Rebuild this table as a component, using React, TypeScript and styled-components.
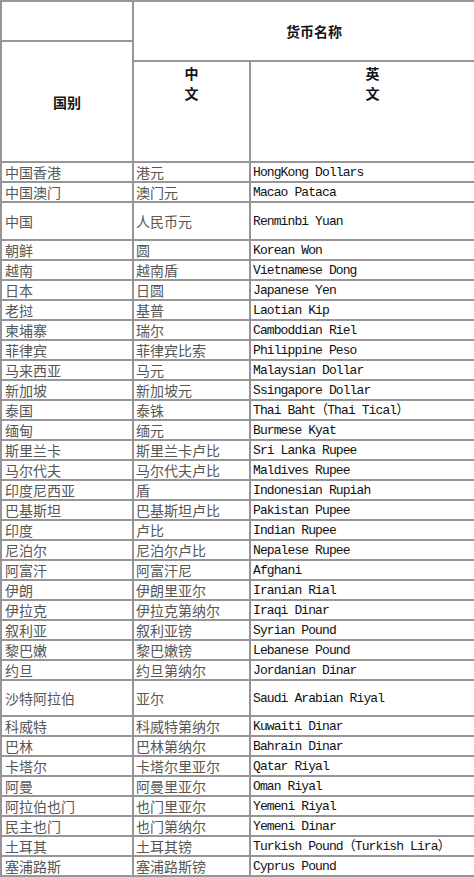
import React from "react";
import styled, { createGlobalStyle } from "styled-components";

type Row = { country: string; zh: string; en: string; height?: number };

const rows: Row[] = [
  { country: "中国香港", zh: "港元", en: "HongKong Dollars" },
  { country: "中国澳门", zh: "澳门元", en: "Macao Pataca" },
  { country: "中国", zh: "人民币元", en: "Renminbi Yuan", height: 36 },
  { country: "朝鲜", zh: "圆", en: "Korean Won" },
  { country: "越南", zh: "越南盾", en: "Vietnamese Dong" },
  { country: "日本", zh: "日圆", en: "Japanese Yen" },
  { country: "老挝", zh: "基普", en: "Laotian Kip" },
  { country: "柬埔寨", zh: "瑞尔", en: "Camboddian Riel" },
  { country: "菲律宾", zh: "菲律宾比索", en: "Philippine Peso" },
  { country: "马来西亚", zh: "马元", en: "Malaysian Dollar" },
  { country: "新加坡", zh: "新加坡元", en: "Ssingapore Dollar" },
  { country: "泰国", zh: "泰铢", en: "Thai Baht（Thai Tical）" },
  { country: "缅甸", zh: "缅元", en: "Burmese Kyat" },
  { country: "斯里兰卡", zh: "斯里兰卡卢比", en: "Sri Lanka Rupee" },
  { country: "马尔代夫", zh: "马尔代夫卢比", en: "Maldives Rupee" },
  { country: "印度尼西亚", zh: "盾", en: "Indonesian Rupiah" },
  { country: "巴基斯坦", zh: "巴基斯坦卢比", en: "Pakistan Pupee" },
  { country: "印度", zh: "卢比", en: "Indian Rupee" },
  { country: "尼泊尔", zh: "尼泊尔卢比", en: "Nepalese Rupee" },
  { country: "阿富汗", zh: "阿富汗尼", en: "Afghani" },
  { country: "伊朗", zh: "伊朗里亚尔", en: "Iranian Rial" },
  { country: "伊拉克", zh: "伊拉克第纳尔", en: "Iraqi Dinar" },
  { country: "叙利亚", zh: "叙利亚镑", en: "Syrian Pound" },
  { country: "黎巴嫩", zh: "黎巴嫩镑", en: "Lebanese Pound" },
  { country: "约旦", zh: "约旦第纳尔", en: "Jordanian Dinar" },
  { country: "沙特阿拉伯", zh: "亚尔", en: "Saudi Arabian Riyal", height: 34 },
  { country: "科威特", zh: "科威特第纳尔", en: "Kuwaiti Dinar" },
  { country: "巴林", zh: "巴林第纳尔", en: "Bahrain Dinar" },
  { country: "卡塔尔", zh: "卡塔尔里亚尔", en: "Qatar Riyal" },
  { country: "阿曼", zh: "阿曼里亚尔", en: "Oman Riyal" },
  { country: "阿拉伯也门", zh: "也门里亚尔", en: "Yemeni Riyal" },
  { country: "民主也门", zh: "也门第纳尔", en: "Yemeni Dinar" },
  { country: "土耳其", zh: "土耳其镑", en: "Turkish Pound（Turkish Lira）" },
  { country: "塞浦路斯", zh: "塞浦路斯镑", en: "Cyprus Pound" },
];

export default function App(): React.ReactElement {
  return (
    <>
      <GlobalStyle />
      <Table>
        {/* header block */}
        <HeaderCell $col="1" $row="1" />
        <HeaderCell $col="1" $row="2 / span 2">
          国别
        </HeaderCell>
        <HeaderCell $col="2 / span 2" $row="1 / span 2">
          货币名称
        </HeaderCell>
        <StackedHeader $col="2" $row="3">
          <span>中</span>
          <span>文</span>
        </StackedHeader>
        <StackedHeader $col="3" $row="3">
          <span>英</span>
          <span>文</span>
        </StackedHeader>

        {rows.map((r) => (
          <React.Fragment key={r.country}>
            <CjkCell $h={r.height ?? 18} $pad={3}>
              {r.country}
            </CjkCell>
            <CjkCell $h={r.height ?? 18} $pad={2}>
              {r.zh}
            </CjkCell>
            <EnCell $h={r.height ?? 18}>{r.en}</EnCell>
          </React.Fragment>
        ))}
      </Table>
    </>
  );
}

// Styled Components
const GlobalStyle = createGlobalStyle`
  html, body {
    margin: 0;
    padding: 0;
    background: #ffffff;
    overflow: hidden;
  }
`;

const Table = styled.div`
  width: 492px;
  display: grid;
  grid-template-columns: 130px 115px 1fr;
  grid-template-rows: 38px 18px 99px;
  gap: 2px;
  padding: 2px 0 2px 2px;
  background: #969696;
  font-family: "Noto Sans CJK SC", sans-serif;
`;

const HeaderCell = styled.div<{ $col: string; $row: string }>`
  grid-column: ${(p) => p.$col};
  grid-row: ${(p) => p.$row};
  background: #fff;
  display: flex;
  align-items: center;
  justify-content: center;
  font-size: 14px;
  font-weight: 700;
  color: #151515;
`;

const StackedHeader = styled(HeaderCell)`
  flex-direction: column;
  justify-content: flex-start;
  padding-top: 1px;
  line-height: 20px;
`;

const CjkCell = styled.div<{ $h: number; $pad: number }>`
  height: ${(p) => p.$h}px;
  background: #fff;
  display: flex;
  align-items: center;
  padding-left: ${(p) => p.$pad}px;
  font-size: 14px;
  line-height: 18px;
  font-weight: 400;
  color: #575757;
  white-space: nowrap;
`;

const EnCell = styled.div<{ $h: number }>`
  height: ${(p) => p.$h}px;
  box-sizing: border-box;
  background: #fff;
  display: flex;
  align-items: center;
  padding: 2px 0 0 2px;
  font-family: "Liberation Mono", "Noto Sans CJK SC", monospace;
  font-size: 13px;
  line-height: 16px;
  letter-spacing: -0.9px;
  color: #111;
  white-space: nowrap;
`;
